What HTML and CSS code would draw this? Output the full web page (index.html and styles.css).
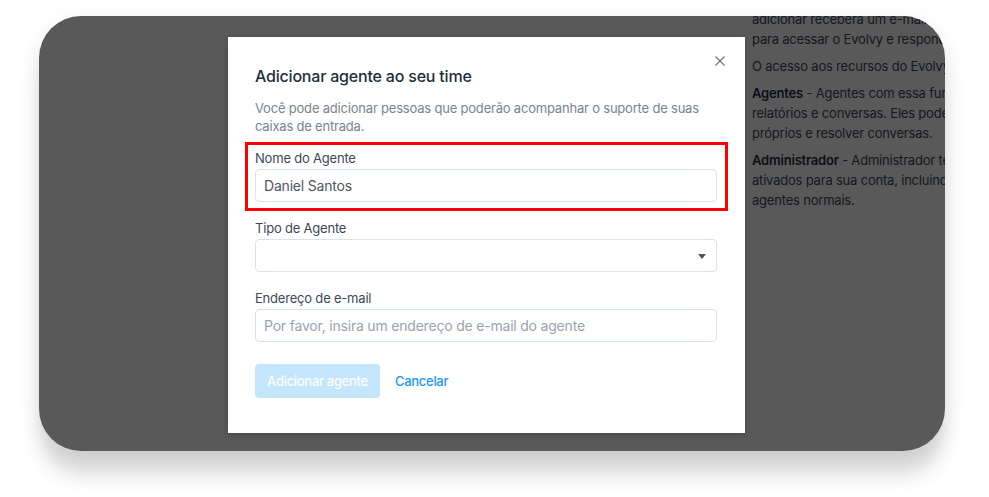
FILE: index.html
```html
<!DOCTYPE html>
<html lang="pt-BR">
<head>
    <meta charset="UTF-8">
    <meta name="viewport" content="width=device-width, initial-scale=1.0">
    <title>Adicionar agente</title>
    <link rel="stylesheet" href="styles.css">
</head>
<body>
    <div class="screen">
        <!-- Page behind the modal -->
        <div class="page">
            <div class="help">
                <p>adicionar receberá um e-mail com um link de confirmação<br>para acessar o Evolvy e responder às mensagens.</p>
                <p>O acesso aos recursos do Evolvy é baseado nas seguintes funções.</p>
                <p><b>Agentes</b> - Agentes com essa função só podem acessar caixas de entrada,<br>relatórios e conversas. Eles podem atribuir conversas a outros agentes<br>próprios e resolver conversas.</p>
                <p><b>Administrador</b> - Administrador terá acesso a todos os recursos<br>ativados para sua conta, incluindo configurações, juntamente com<br>agentes normais.</p>
            </div>
        </div>

        <!-- Modal -->
        <div class="overlay">
            <div class="modal">
                <button class="modal__close" type="button" aria-label="Fechar">
                    <svg width="14" height="14" viewBox="0 0 14 14">
                        <path d="M2.5 2.5 L11.5 11.5 M11.5 2.5 L2.5 11.5" stroke="#6b7280" stroke-width="1.1" fill="none"/>
                    </svg>
                </button>

                <h2 class="modal__title">Adicionar agente ao seu time</h2>
                <p class="modal__desc">Você pode adicionar pessoas que poderão acompanhar o suporte de suas caixas de entrada.</p>

                <form class="modal__form">
                    <div class="highlight">
                        <div class="field">
                            <label for="agent-name">Nome do Agente</label>
                            <input type="text" id="agent-name" value="Daniel Santos">
                        </div>
                    </div>

                    <div class="field field--type">
                        <label for="agent-type">Tipo de Agente</label>
                        <div class="select">
                            <select id="agent-type"></select>
                            <span class="select__arrow"></span>
                        </div>
                    </div>

                    <div class="field field--email">
                        <label for="agent-email">Endereço de e-mail</label>
                        <input type="email" id="agent-email" placeholder="Por favor, insira um endereço de e-mail do agente">
                    </div>

                    <div class="actions">
                        <button type="submit" class="btn-primary" disabled>Adicionar agente</button>
                        <button type="button" class="btn-link">Cancelar</button>
                    </div>
                </form>
            </div>
        </div>
    </div>
</body>
</html>
```

FILE: styles.css
```css
/* Basic Styling */
html,
body {
    height: 100%;
}

body {
    margin: 0;
    padding: 16px 0 0 39px;
    box-sizing: border-box;
    background-color: #ffffff;
    font-family: Inter, "Noto Sans", sans-serif;
    letter-spacing: -0.2px;
}

.screen {
    position: relative;
    width: 906px;
    height: 435px;
    border-radius: 42px;
    overflow: hidden;
    background-color: #ffffff;
    box-shadow: 0 26px 20px -2px rgba(0, 0, 0, 0.14), 0 6px 22px rgba(0, 0, 0, 0.08);
}

/* Page behind the modal */
.page {
    display: flex;
    justify-content: flex-end;
    height: 100%;
}

.help {
    width: 193px;
    margin-top: -7px;
    white-space: nowrap;
    font-size: 13px;
    line-height: 20px;
    color: #3c4858;
}

.help p {
    margin: 0 0 7px;
}

.help b {
    font-weight: 600;
    color: #1f2d3d;
}

.overlay {
    position: absolute;
    inset: 0;
    background-color: rgba(0, 0, 0, 0.65);
    padding: 21px 0 0 189px;
}

/* Modal */
.modal {
    position: relative;
    width: 462px;
    padding: 27px 28px 35px 27px;
    background-color: #ffffff;
    box-shadow: 0 2px 6px rgba(0, 0, 0, 0.2);
}

.modal__close {
    position: absolute;
    top: 17px;
    right: 18px;
    padding: 0;
    border: none;
    background: none;
    cursor: pointer;
    display: flex;
}

.modal__title {
    margin: 0;
    font-size: 16px;
    line-height: 24px;
    font-weight: 500;
    color: #1f2d3d;
}

.modal__desc {
    margin: 11px 0 7px;
    font-size: 13px;
    line-height: 18px;
    color: #7a8390;
}

.highlight {
    margin: 0 -11px 0 -10px;
    padding: 4px 8px 6px 7px;
    border: 3px solid #ff0000;
}

.field {
    display: flex;
    flex-direction: column;
    gap: 2px;
}

.field--type {
    margin-top: 8px;
}

.field--email {
    margin-top: 17px;
}

label {
    font-size: 13px;
    line-height: 18px;
    color: #3c4858;
}

input,
select {
    box-sizing: border-box;
    width: 100%;
    height: 33px;
    margin: 0;
    padding: 0 8px;
    border: 1px solid #dbe2ea;
    border-radius: 4px;
    background-color: #ffffff;
    font-family: inherit;
    letter-spacing: inherit;
    font-size: 14px;
    color: #4f5764;
    outline: none;
}

input::placeholder {
    color: #9aa3ae;
}

.select {
    position: relative;
}

select {
    appearance: none;
}

.select__arrow {
    position: absolute;
    top: 15px;
    right: 11px;
    border-left: 4px solid transparent;
    border-right: 4px solid transparent;
    border-top: 5px solid #555555;
}

.actions {
    display: flex;
    align-items: center;
    gap: 15px;
    margin-top: 22px;
}

.btn-primary {
    height: 34px;
    width: 125px;
    padding: 0;
    border: none;
    border-radius: 4px;
    background-color: #c4e6fd;
    color: #ffffff;
    font-family: inherit;
    letter-spacing: -0.3px;
    font-size: 13px;
    font-weight: 500;
}

.btn-link {
    padding: 0;
    border: none;
    background: none;
    color: #1a98f5;
    font-family: inherit;
    letter-spacing: -0.3px;
    font-size: 13px;
    font-weight: 500;
    cursor: pointer;
}
```
